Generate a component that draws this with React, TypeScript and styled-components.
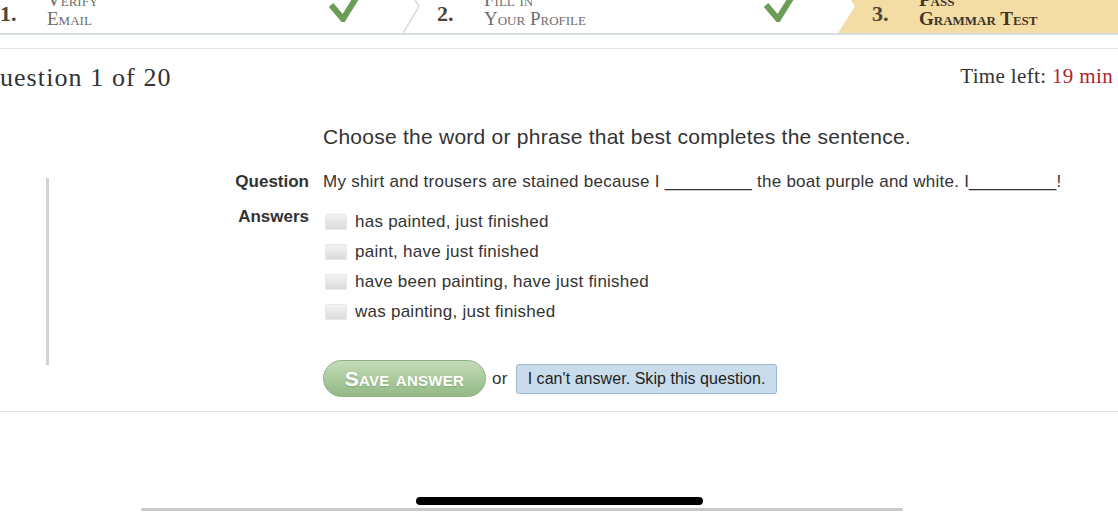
import React from "react";
import styled, { createGlobalStyle } from "styled-components";

const Global = createGlobalStyle`
  html, body { margin: 0; padding: 0; background: #fff; overflow: hidden; }
  #root { width: 1118px; height: 516px; overflow: hidden; }
`;

const serif = `"Liberation Serif", "Times New Roman", serif`;
const sans = `"Liberation Sans", Arial, Helvetica, sans-serif`;

const Page = styled.div`
  display: flex;
  flex-direction: column;
  height: 516px;
  width: 1118px;
`;

const StepBar = styled.div`
  display: grid;
  grid-template-columns: 420px 435px 1fr;
  height: 53px;
  margin-top: -20px;
  margin-left: -17px;
  border-bottom: 2px solid #d7dee1;
`;

const Step = styled.div<{ $active?: boolean; $first?: boolean }>`
  display: flex;
  align-items: flex-start;
  padding-left: ${(p) => (p.$first ? "17px" : "0")};
  background: ${(p) => (p.$active ? "#f4dda4" : "transparent")};
  clip-path: ${(p) =>
    p.$active ? "polygon(0 0, 17px 50%, 0 100%, 100% 100%, 100% 0)" : "none"};
  font-family: ${serif};
`;

const ChevronBox = styled.svg`
  width: 17px;
  height: 53px;
  flex-shrink: 0;
  margin-right: 17px;
`;

const StepNum = styled.div`
  width: 47px;
  flex-shrink: 0;
  margin-top: 23px;
  font-size: 22px;
  line-height: 22px;
  font-weight: bold;
  color: #4b4536;
`;

const StepLabel = styled.div<{ $active?: boolean }>`
  margin-top: 10px;
  font-size: 19px;
  line-height: 19px;
  font-variant: small-caps;
  font-weight: ${(p) => (p.$active ? "bold" : "normal")};
  color: ${(p) => (p.$active ? "#3e3528" : "#6d6d6d")};
`;

const Check = styled.svg`
  width: 30px;
  height: 30px;
  margin-left: auto;
  margin-right: 44px;
  margin-top: 12px;
  flex-shrink: 0;
`;

const Rule = styled.div`
  height: 1px;
  background: #e4e4e4;
  margin-top: 13px;
`;

const TitleRow = styled.div`
  display: flex;
  justify-content: space-between;
  align-items: flex-start;
  padding-top: 14px;
  padding-right: 5px;
  font-family: ${serif};
  color: #333;
`;

const QuestionCount = styled.div`
  margin-left: -20px;
  font-size: 26px;
  line-height: 30px;
  letter-spacing: 1.1px;
`;

const TimeLeft = styled.div`
  margin-top: 1px;
  font-size: 21px;
  line-height: 24px;
  letter-spacing: 0.35px;
`;

const Minutes = styled.span`
  color: #b0232b;
`;

const Main = styled.div`
  display: flex;
  margin-top: 31px;
  font-family: ${sans};
  color: #333;
  letter-spacing: 0.25px;
`;

const SideRule = styled.div`
  width: 3px;
  height: 187px;
  margin-left: 46px;
  margin-top: 54px;
  background: #d2d2d2;
  flex-shrink: 0;
`;

const Form = styled.div`
  display: grid;
  grid-template-columns: 260px 1fr;
  column-gap: 14px;
  align-items: start;
  flex: 1;
`;

const Instruction = styled.div`
  grid-column: 2;
  font-size: 21px;
  line-height: 26px;
  color: #333;
`;

const FieldLabel = styled.div<{ $gap: number }>`
  grid-column: 1;
  margin-top: ${(p) => p.$gap}px;
  text-align: right;
  font-size: 17px;
  line-height: 22px;
  font-weight: bold;
  letter-spacing: 0;
  color: #333;
`;

const QuestionText = styled.div`
  grid-column: 2;
  margin-top: 21px;
  font-size: 17px;
  line-height: 22px;
`;

const AnswerList = styled.div`
  grid-column: 2;
  margin-top: 14px;
  display: flex;
  flex-direction: column;
`;

const AnswerItem = styled.label`
  display: flex;
  align-items: center;
  height: 30px;
  gap: 8px;
  font-size: 17px;
`;

const Box = styled.span`
  display: inline-block;
  width: 22px;
  height: 16px;
  margin-left: 2px;
  border-radius: 2px;
  background: linear-gradient(#f4f4f4, #d9d9d9);
  box-shadow: inset 0 0 0 1px #e8e8e8;
`;

const Actions = styled.div`
  grid-column: 2;
  margin-top: 33px;
  display: flex;
  align-items: center;
`;

const SaveButton = styled.button`
  width: 163px;
  height: 37px;
  border-radius: 19px;
  border: 1px solid #8fb27f;
  background: linear-gradient(#c4dbb8, #93b985);
  color: #fff;
  font-family: ${sans};
  font-weight: bold;
  font-size: 21px;
  font-variant: small-caps;
  letter-spacing: 0.3px;
  text-shadow: 0 1px 1px rgba(60, 90, 50, 0.25);
  padding: 0;
  cursor: pointer;
`;

const Or = styled.span`
  margin: 0 8px 0 6px;
  font-size: 17px;
  color: #333;
`;

const SkipButton = styled.button`
  height: 30px;
  padding: 0 11px;
  border: 1px solid #9bb5c9;
  border-radius: 3px;
  background: #c8dcec;
  color: #1e1e1e;
  font-family: ${sans};
  font-size: 16px;
  letter-spacing: 0.05px;
  cursor: pointer;
`;

const BottomRule = styled.div`
  height: 1px;
  background: #e2e2e2;
  margin-top: 14px;
`;

const Footer = styled.div`
  flex: 1;
  display: flex;
  flex-direction: column;
  justify-content: flex-end;
  align-items: flex-start;
  gap: 3px;
  padding-bottom: 5px;
`;

const HomeIndicator = styled.div`
  width: 287px;
  height: 8px;
  margin-left: 416px;
  border-radius: 4px;
  background: #000;
`;

const ScrollTrack = styled.div`
  width: 762px;
  height: 3px;
  margin-left: 141px;
  border-radius: 2px;
  background: #c9c9c9;
`;

const Chevron = () => (
  <ChevronBox viewBox="0 0 17 53">
    <polyline points="0,0 16,26.5 0,53" fill="none" stroke="#d3d9dc" strokeWidth="1.5" />
  </ChevronBox>
);

const Spacer = () => <ChevronBox viewBox="0 0 17 53" />;

const CheckMark = () => (
  <Check viewBox="0 0 30 30">
    <polyline
      points="2,13 14,27 29,3"
      fill="none"
      stroke="#6c9d57"
      strokeWidth="6"
      strokeLinejoin="miter"
    />
  </Check>
);

const answers = [
  "has painted, just finished",
  "paint, have just finished",
  "have been painting, have just finished",
  "was painting, just finished",
];

export default function App() {
  return (
    <Page>
      <Global />
      <StepBar>
        <Step $first>
          <StepNum>1.</StepNum>
          <StepLabel>
            Verify
            <br />
            Email
          </StepLabel>
          <CheckMark />
        </Step>
        <Step>
          <Chevron />
          <StepNum>2.</StepNum>
          <StepLabel>
            Fill in
            <br />
            Your Profile
          </StepLabel>
          <CheckMark />
        </Step>
        <Step $active>
          <Spacer />
          <StepNum>3.</StepNum>
          <StepLabel $active>
            Pass
            <br />
            Grammar Test
          </StepLabel>
        </Step>
      </StepBar>
      <Rule />
      <TitleRow>
        <QuestionCount>Question 1 of 20</QuestionCount>
        <TimeLeft>
          Time left: <Minutes>19 min</Minutes>
        </TimeLeft>
      </TitleRow>
      <Main>
        <SideRule />
        <Form>
          <Instruction>Choose the word or phrase that best completes the sentence.</Instruction>
          <FieldLabel $gap={21}>Question</FieldLabel>
          <QuestionText>
            My shirt and trousers are stained because I _________ the boat purple and white. I_________!
          </QuestionText>
          <FieldLabel $gap={13}>Answers</FieldLabel>
          <AnswerList>
            {answers.map((a) => (
              <AnswerItem key={a}>
                <Box />
                {a}
              </AnswerItem>
            ))}
          </AnswerList>
          <Actions>
            <SaveButton>Save answer</SaveButton>
            <Or>or</Or>
            <SkipButton>I can't answer. Skip this question.</SkipButton>
          </Actions>
        </Form>
      </Main>
      <BottomRule />
      <Footer>
        <HomeIndicator />
        <ScrollTrack />
      </Footer>
    </Page>
  );
}
